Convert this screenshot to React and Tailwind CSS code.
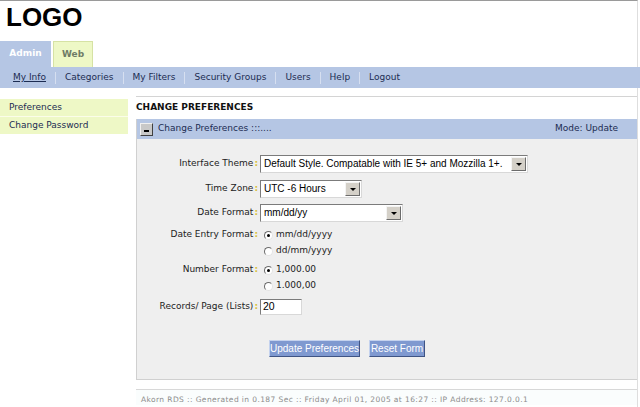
import React from "react";

const navItems = ["My Info", "Categories", "My Filters", "Security Groups", "Users", "Help", "Logout"];

const Select = ({ width, value }) => (
  <div
    className="flex h-[18px] items-stretch border border-t-[#7b7b7b] border-l-[#7b7b7b] border-r-[#d8d8d8] border-b-[#d8d8d8] bg-white"
    style={{ width }}
  >
    <div className="flex-1 overflow-hidden whitespace-nowrap pl-[3px] font-['Liberation_Sans',sans-serif] text-[10px] leading-[16px] text-black">
      {value}
    </div>
    <div className="my-[1px] mr-[1px] flex w-[15px] items-center justify-center border border-t-[#f4f4f4] border-l-[#f4f4f4] border-r-[#6b6b6b] border-b-[#6b6b6b] bg-[#d4d0c8]">
      <div className="h-0 w-0 border-x-[3px] border-t-[3px] border-x-transparent border-t-black" />
    </div>
  </div>
);

const Radio = ({ checked, label }) => (
  <div className="flex h-4 items-center">
    <div className="ml-[4px] flex h-[9px] w-[9px] items-center justify-center rounded-full border border-t-[#6b6b6b] border-l-[#6b6b6b] border-r-[#e4e4e4] border-b-[#e4e4e4] bg-white">
      {checked && <div className="h-[3px] w-[3px] rounded-full bg-black" />}
    </div>
    <span className="ml-[3px] text-[9px] text-[#222]">{label}</span>
  </div>
);

const Label = ({ children, h = "h-4" }) => (
  <div className={`flex ${h} items-center justify-end pr-[2px] text-[9px] text-[#222]`}>
    {children}
    <span className="ml-[1px] font-bold text-[#d9bf3c]">:</span>
  </div>
);

const Button = ({ children, width }) => (
  <div
    className="flex h-[17px] items-center justify-center border border-t-[#c4d2ee] border-l-[#c4d2ee] border-r-[#3f5484] border-b-[#3f5484] bg-[#7f99d0] font-['Liberation_Sans',sans-serif] text-[10px] text-white"
    style={{ width }}
  >
    {children}
  </div>
);

export default function App() {
  return (
    <div className="h-[407px] w-[640px] overflow-hidden bg-white font-['DejaVu_Sans',sans-serif]">
      <div className="h-[407px] w-[638px] border-t border-r border-t-[#9a9a9a] border-r-[#dedede]">
        {/* logo */}
        <div className="h-[40px] pl-[6px] pt-[1px] font-['Liberation_Sans',sans-serif] text-[26px] font-bold leading-[30px] text-black">
          LOGO
        </div>

        {/* tabs */}
        <div className="flex h-[26px] items-stretch">
          <div className="flex w-[51px] items-center justify-center bg-[#b5c6e4] text-[9px] font-bold text-white">
            Admin
          </div>
          <div className="ml-[2px] flex w-[40px] items-center justify-center border border-b-0 border-[#d6e2a4] bg-[#eef8c6] text-[9px] font-bold text-[#6e7c66]">
            Web
          </div>
        </div>

        {/* nav */}
        <div className="flex h-[21px] w-[640px] items-center bg-[#b5c6e4] pl-[4px] text-[9px] text-[#1c2c52]">
          {navItems.map((item, i) => (
            <React.Fragment key={item}>
              {i > 0 && <div className="h-[12px] w-px bg-[#d6dff0]" />}
              <span className={`px-[9px] ${i === 0 ? "underline" : ""}`}>{item}</span>
            </React.Fragment>
          ))}
        </div>

        {/* body */}
        <div className="mt-[8px] flex">
          {/* sidebar */}
          <div className="mt-[3px] w-[128px] text-[9px] text-[#1c2c52]">
            <div className="flex h-[18px] items-center border-b border-[#fbfde9] bg-[#eef8c6] pl-[9px]">Preferences</div>
            <div className="flex h-[17px] items-center bg-[#eef8c6] pl-[9px]">Change Password</div>
          </div>

          {/* content */}
          <div className="ml-[8px] flex-1 border-t border-[#d4d4d4]">
            <div className="flex h-[22px] items-center text-[9px] font-bold text-[#111]">CHANGE PREFERENCES</div>

            <div className="border-b border-l border-[#d0d0d0]">
              {/* panel header */}
              <div className="flex h-[20px] items-center bg-[#b5c6e4] text-[9px] text-[#1c2c52]">
                <div className="ml-[3px] flex h-[13px] w-[13px] items-end justify-center border border-t-[#f0f0f0] border-l-[#f0f0f0] border-r-[#404040] border-b-[#404040] bg-[#c8c8c8] pb-[3px]">
                  <div className="h-[2px] w-[5px] bg-black" />
                </div>
                <span className="ml-[5px]">Change Preferences :::....</span>
                <span className="ml-auto mr-[19px]">Mode: Update</span>
              </div>

              {/* panel body */}
              <div className="bg-[#efefef] pb-[22px] pt-[16px]">
                <div className="grid grid-cols-[123px_1fr] items-start">
                  <Label h="h-[18px]">Interface Theme</Label>
                  <Select width={268} value="Default Style. Compatable with IE 5+ and Mozzilla 1+." />

                  <div className="mt-[7px]">
                    <Label h="h-[18px]">Time Zone</Label>
                  </div>
                  <div className="mt-[7px]">
                    <Select width={102} value="UTC -6 Hours" />
                  </div>

                  <div className="mt-[6px]">
                    <Label h="h-[18px]">Date Format</Label>
                  </div>
                  <div className="mt-[6px]">
                    <Select width={143} value="mm/dd/yy" />
                  </div>

                  <div className="mt-[5px]">
                    <Label>Date Entry Format</Label>
                  </div>
                  <div className="mt-[5px]">
                    <Radio checked label="mm/dd/yyyy" />
                    <Radio label="dd/mm/yyyy" />
                  </div>

                  <div className="mt-[3px]">
                    <Label>Number Format</Label>
                  </div>
                  <div className="mt-[3px]">
                    <Radio checked label="1,000.00" />
                    <Radio label="1.000,00" />
                  </div>

                  <div className="mt-[5px]">
                    <Label>Records/ Page (Lists)</Label>
                  </div>
                  <div className="mt-[5px]">
                    <div className="flex h-[16px] w-[42px] items-center border border-t-[#7b7b7b] border-l-[#7b7b7b] border-r-[#d8d8d8] border-b-[#d8d8d8] bg-white pl-[2px] font-['Liberation_Sans',sans-serif] text-[10.5px] text-black">
                      20
                    </div>
                  </div>

                  <div />
                  <div className="ml-[9px] mt-[25px] flex gap-[9px]">
                    <Button width={91}>Update Preferences</Button>
                    <Button width={56}>Reset Form</Button>
                  </div>
                </div>
              </div>
            </div>

            {/* footer */}
            <div className="mt-[9px] border-t border-[#d8d8d8] bg-[#fafdfd] pl-[5px] pt-[4px] text-[7.5px] tracking-[0.4px] text-[#8c8c8c]">
              Akorn RDS :: Generated in 0.187 Sec :: Friday April 01, 2005 at 16:27 :: IP Address: 127.0.0.1
            </div>
          </div>
        </div>
      </div>
    </div>
  );
}
